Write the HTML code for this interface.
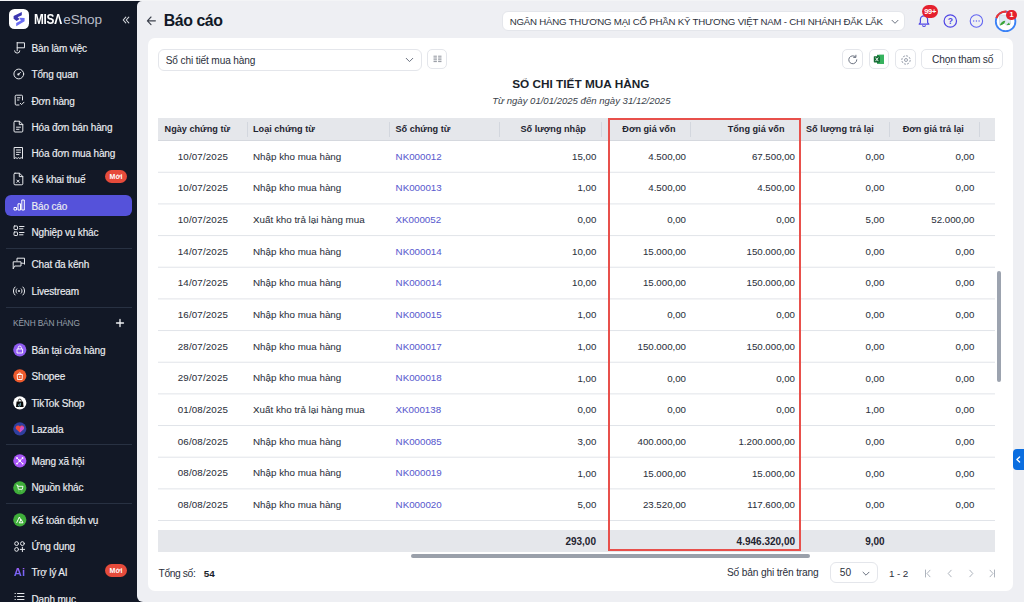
<!DOCTYPE html><html><head><meta charset="utf-8"><style>
*{box-sizing:border-box;margin:0;padding:0}
html,body{width:1024px;height:602px;overflow:hidden;background:#f3f4f6;font-family:"Liberation Sans", sans-serif;}
.a{position:absolute}
.t{position:absolute;white-space:nowrap}
</style></head><body>
<div class="a" style="left:0.00px;top:1.30px;width:145.00px;height:601.00px;background:#121826"></div>
<div class="a" style="left:8.80px;top:8.60px;width:20.60px;height:20.70px;background:#fff;border-radius:5.5px"></div>
<svg class="a" style="left:0px;top:0px" width="32" height="32" viewBox="0 0 32 32"><path d="M13.6 16.0 L21.8 12.0 L21.8 15.2 L17.6 17.3 L19.6 18.9 L16.6 21.0 L13.6 18.7 Z" fill="#3b36b0"/><path d="M19.3 17.8 L24.6 18.0 L24.6 21.3 L16.2 26.2 L16.2 23.0 L20.9 20.5 Z" fill="#6a6cf2"/></svg>
<div class="t" style="left:34.3px;top:11.0px;font-size:14.4px;line-height:17px;color:#fff;font-weight:700;letter-spacing:-0.3px;transform:scaleX(0.82);transform-origin:0 0">MISΛ</div>
<div class="t" style="top:10.79px;font-size:13.6px;line-height:17.0px;color:#b8bcc6;letter-spacing:-0.1px;left:63.20px;">eShop</div>
<svg class="a" style="left:122px;top:16px" width="8" height="8" viewBox="0 0 8 8"><path d="M3.8 1.2 L1.2 4 L3.8 6.8 M6.8 1.2 L4.2 4 L6.8 6.8" fill="none" stroke="#d5d8de" stroke-width="1.1" stroke-linecap="round" stroke-linejoin="round"/></svg>
<div class="a" style="left:5.00px;top:195.00px;width:127.00px;height:21.20px;background:#5552da;border-radius:6px"></div>
<div class="t" style="top:42.88px;font-size:10px;line-height:12.5px;color:#eceef2;letter-spacing:-0.15px;left:31.50px;-webkit-text-stroke:0.15px #eceef2;">Bàn làm việc</div>
<div class="t" style="top:69.38px;font-size:10px;line-height:12.5px;color:#eceef2;letter-spacing:-0.15px;left:31.50px;-webkit-text-stroke:0.15px #eceef2;">Tổng quan</div>
<div class="t" style="top:95.58px;font-size:10px;line-height:12.5px;color:#eceef2;letter-spacing:-0.15px;left:31.50px;-webkit-text-stroke:0.15px #eceef2;">Đơn hàng</div>
<div class="t" style="top:121.88px;font-size:10px;line-height:12.5px;color:#eceef2;letter-spacing:-0.15px;left:31.50px;-webkit-text-stroke:0.15px #eceef2;">Hóa đơn bán hàng</div>
<div class="t" style="top:148.09px;font-size:10px;line-height:12.5px;color:#eceef2;letter-spacing:-0.15px;left:31.50px;-webkit-text-stroke:0.15px #eceef2;">Hóa đơn mua hàng</div>
<div class="t" style="top:174.28px;font-size:10px;line-height:12.5px;color:#eceef2;letter-spacing:-0.15px;left:31.50px;-webkit-text-stroke:0.15px #eceef2;">Kê khai thuế</div>
<div class="t" style="top:200.59px;font-size:10px;line-height:12.5px;color:#eceef2;letter-spacing:-0.15px;left:31.50px;-webkit-text-stroke:0.15px #eceef2;">Báo cáo</div>
<div class="t" style="top:226.89px;font-size:10px;line-height:12.5px;color:#eceef2;letter-spacing:-0.15px;left:31.50px;-webkit-text-stroke:0.15px #eceef2;">Nghiệp vụ khác</div>
<div class="t" style="top:259.39px;font-size:10px;line-height:12.5px;color:#eceef2;letter-spacing:-0.15px;left:31.50px;-webkit-text-stroke:0.15px #eceef2;">Chat đa kênh</div>
<div class="t" style="top:285.89px;font-size:10px;line-height:12.5px;color:#eceef2;letter-spacing:-0.15px;left:31.50px;-webkit-text-stroke:0.15px #eceef2;">Livestream</div>
<div class="t" style="top:344.89px;font-size:10px;line-height:12.5px;color:#eceef2;letter-spacing:-0.15px;left:31.50px;-webkit-text-stroke:0.15px #eceef2;">Bán tại cửa hàng</div>
<div class="t" style="top:371.39px;font-size:10px;line-height:12.5px;color:#eceef2;letter-spacing:-0.15px;left:31.50px;-webkit-text-stroke:0.15px #eceef2;">Shopee</div>
<div class="t" style="top:397.59px;font-size:10px;line-height:12.5px;color:#eceef2;letter-spacing:-0.15px;left:31.50px;-webkit-text-stroke:0.15px #eceef2;">TikTok Shop</div>
<div class="t" style="top:423.79px;font-size:10px;line-height:12.5px;color:#eceef2;letter-spacing:-0.15px;left:31.50px;-webkit-text-stroke:0.15px #eceef2;">Lazada</div>
<div class="t" style="top:456.09px;font-size:10px;line-height:12.5px;color:#eceef2;letter-spacing:-0.15px;left:31.50px;-webkit-text-stroke:0.15px #eceef2;">Mạng xã hội</div>
<div class="t" style="top:482.49px;font-size:10px;line-height:12.5px;color:#eceef2;letter-spacing:-0.15px;left:31.50px;-webkit-text-stroke:0.15px #eceef2;">Nguồn khác</div>
<div class="t" style="top:514.58px;font-size:10px;line-height:12.5px;color:#eceef2;letter-spacing:-0.15px;left:31.50px;-webkit-text-stroke:0.15px #eceef2;">Kế toán dịch vụ</div>
<div class="t" style="top:541.08px;font-size:10px;line-height:12.5px;color:#eceef2;letter-spacing:-0.15px;left:31.50px;-webkit-text-stroke:0.15px #eceef2;">Ứng dụng</div>
<div class="t" style="top:567.18px;font-size:10px;line-height:12.5px;color:#eceef2;letter-spacing:-0.15px;left:31.50px;-webkit-text-stroke:0.15px #eceef2;">Trợ lý AI</div>
<div class="t" style="top:593.58px;font-size:10px;line-height:12.5px;color:#eceef2;letter-spacing:-0.15px;left:31.50px;-webkit-text-stroke:0.15px #eceef2;">Danh mục</div>
<div class="a" style="left:5.50px;top:248.00px;width:126.00px;height:1.00px;background:#283142"></div>
<div class="a" style="left:5.50px;top:306.60px;width:126.00px;height:1.00px;background:#283142"></div>
<div class="a" style="left:5.50px;top:444.40px;width:126.00px;height:1.00px;background:#283142"></div>
<div class="a" style="left:5.50px;top:503.40px;width:126.00px;height:1.00px;background:#283142"></div>
<div class="t" style="top:317.93px;font-size:8.3px;line-height:10.38px;color:#9aa0ad;letter-spacing:-0.16px;left:13.10px;">KÊNH BÁN HÀNG</div>
<svg class="a" style="left:115px;top:318px" width="10" height="10" viewBox="0 0 10 10"><path d="M5 1.5 V8.5 M1.5 5 H8.5" stroke="#f0f1f4" stroke-width="1.3" stroke-linecap="round"/></svg>
<svg class="a" style="left:13px;top:41px" width="13" height="13" viewBox="0 0 13 13"><path d="M4.2 1.5 V9.8 M4.2 1.8 H11.5 V6.8 H4.2 M1.6 9.8 A2.6 2.3 0 0 0 6.8 9.8" stroke="#e6e8ec" stroke-width="1" fill="none" stroke-linecap="round" stroke-linejoin="round"/></svg>
<svg class="a" style="left:13px;top:68px" width="12" height="12" viewBox="0 0 12 12"><circle cx="5.8" cy="6" r="4.9" stroke="#e6e8ec" stroke-width="1" fill="none" stroke-linecap="round" stroke-linejoin="round"/><path d="M5.2 6.6 L7.6 4.2" stroke="#e6e8ec" stroke-width="1" fill="none" stroke-linecap="round" stroke-linejoin="round"/><circle cx="5.4" cy="6.4" r="1.1" fill="#e6e8ec"/></svg>
<svg class="a" style="left:14px;top:94px" width="11" height="12" viewBox="0 0 11 12"><path d="M8.5 6 V2.2 A1 1 0 0 0 7.5 1.2 H2.2 A1 1 0 0 0 1.2 2.2 V10 A1 1 0 0 0 2.2 11 H5" stroke="#e6e8ec" stroke-width="1" fill="none" stroke-linecap="round" stroke-linejoin="round"/><path d="M3.5 3.8 H6 M3.5 6 H5" stroke="#e6e8ec" stroke-width="1" fill="none" stroke-linecap="round" stroke-linejoin="round"/><path d="M6.3 9.3 L7.6 10.6 L10 8.2" stroke="#e6e8ec" stroke-width="1" fill="none" stroke-linecap="round" stroke-linejoin="round"/></svg>
<svg class="a" style="left:13px;top:120px" width="11" height="13" viewBox="0 0 11 13"><path d="M2 1.2 H6.5 L9.8 4.5 V11 A1 1 0 0 1 8.8 12 H2 A1 1 0 0 1 1 11 V2.2 A1 1 0 0 1 2 1.2 Z M6.3 1.3 V4.6 H9.7 M3.5 7.2 H7.5 M3.5 9.3 H6" stroke="#e6e8ec" stroke-width="1" fill="none" stroke-linecap="round" stroke-linejoin="round"/></svg>
<svg class="a" style="left:13px;top:146px" width="11" height="14" viewBox="0 0 11 14"><path d="M1.5 1.5 H9.5 V12.5 L8.2 11.6 L6.8 12.5 L5.5 11.6 L4.2 12.5 L2.8 11.6 L1.5 12.5 Z M3.5 4 H7.5 M3.5 6.3 H7.5 M3.5 8.6 H6" stroke="#e6e8ec" stroke-width="1" fill="none" stroke-linecap="round" stroke-linejoin="round"/></svg>
<svg class="a" style="left:13px;top:172px" width="11" height="14" viewBox="0 0 11 14"><path d="M2 1.2 H6.5 L9.8 4.5 V11.8 A1 1 0 0 1 8.8 12.8 H2 A1 1 0 0 1 1 11.8 V2.2 A1 1 0 0 1 2 1.2 Z M6.3 1.3 V4.6 H9.7 M3.8 8 L6.2 10.4 M6.2 8 L3.8 10.4" stroke="#e6e8ec" stroke-width="1" fill="none" stroke-linecap="round" stroke-linejoin="round"/></svg>
<svg class="a" style="left:13px;top:199px" width="12" height="12" viewBox="0 0 12 12"><path d="M1 11 V8.5 H3.5 V11 Z M5 11 V4.8 H7.5 V11 Z M8.8 11 V1 H11.3 V11 Z" stroke="#fff" stroke-width="1" fill="none" stroke-linejoin="round"/></svg>
<svg class="a" style="left:13px;top:225px" width="12" height="12" viewBox="0 0 12 12"><rect x="1" y="1" width="3.5" height="3.5" rx="0.6" stroke="#e6e8ec" stroke-width="1" fill="none" stroke-linecap="round" stroke-linejoin="round"/><rect x="1" y="7" width="3.5" height="3.5" rx="0.6" stroke="#e6e8ec" stroke-width="1" fill="none" stroke-linecap="round" stroke-linejoin="round"/><path d="M6.5 1.5 H11 M6.5 3.8 H10 M6.5 7.5 H11 M6.5 9.8 H10" stroke="#e6e8ec" stroke-width="1" fill="none" stroke-linecap="round" stroke-linejoin="round"/></svg>
<svg class="a" style="left:12px;top:257px" width="14" height="13" viewBox="0 0 14 13"><path d="M5 3.8 V1.2 H12.5 V7.3 L11.3 6.2 H9.5 M1.2 11.5 V4.8 H9 V9 H3 Z" stroke="#e6e8ec" stroke-width="1" fill="none" stroke-linecap="round" stroke-linejoin="round"/></svg>
<svg class="a" style="left:12px;top:285px" width="14" height="12" viewBox="0 0 14 12"><circle cx="7" cy="6" r="1" fill="#e6e8ec"/><path d="M4.8 3.8 A3 3 0 0 0 4.8 8.2 M9.2 3.8 A3 3 0 0 1 9.2 8.2 M3 2 A5.5 5.5 0 0 0 3 10 M11 2 A5.5 5.5 0 0 1 11 10" stroke="#e6e8ec" stroke-width="1" fill="none" stroke-linecap="round" stroke-linejoin="round"/></svg>
<svg class="a" style="left:12.8px;top:343.1px" width="14" height="14" viewBox="0 0 14 14"><circle cx="6.8" cy="6.8" r="6.6" fill="#8f5bf0"/><path d="M4 6 H9.6 V10 H4 Z M5.2 6 V4.6 A1.6 1.6 0 0 1 8.4 4.6 V6" stroke="#fff" stroke-width="0.9" fill="none"/></svg>
<svg class="a" style="left:12.8px;top:369.2px" width="14" height="14" viewBox="0 0 14 14"><circle cx="6.8" cy="6.8" r="6.6" fill="#ee5a2c"/><path d="M4.2 5.5 H9.4 L9.1 10.5 H4.5 Z M5.5 5.5 A1.3 1.6 0 0 1 8.1 5.5" stroke="#fff" stroke-width="0.9" fill="none"/><path d="M6.8 7 V9" stroke="#fff" stroke-width="0.8"/></svg>
<svg class="a" style="left:12.8px;top:395.6px" width="14" height="14" viewBox="0 0 14 14"><circle cx="6.8" cy="6.8" r="6.6" fill="#ffffff"/><path d="M3.6 5.4 H10 L10.6 11 H3 Z" fill="#0b0b0b"/><path d="M5.3 5.6 V4.6 A1.5 1.5 0 0 1 8.3 4.6 V5.6" stroke="#0b0b0b" stroke-width="0.9" fill="none"/><path d="M7.3 6.8 V9.2 A0.9 0.9 0 1 1 6.4 8.4" stroke="#8fd6e8" stroke-width="0.8" fill="none"/></svg>
<svg class="a" style="left:12.8px;top:421.7px" width="14" height="14" viewBox="0 0 14 14"><circle cx="6.8" cy="6.8" r="6.6" fill="#2f3f9f"/><path d="M6.9 10.6 L3.0 7.0 A2.2 2.2 0 0 1 6.9 4.6 A2.2 2.2 0 0 1 10.8 7.0 Z" fill="#f0483a"/><path d="M6.9 10.6 L10.8 7.0 A2.2 2.2 0 0 0 8.2 4.2 L6.9 6.5 Z" fill="#c94fd0"/></svg>
<svg class="a" style="left:12.8px;top:454.0px" width="14" height="14" viewBox="0 0 14 14"><circle cx="6.8" cy="6.8" r="6.6" fill="#a855f7"/><path d="M4.2 4.2 L9.4 9.4 M9.4 4.2 L4.2 9.4" stroke="#fff" stroke-width="0.9"/><circle cx="6.8" cy="6.8" r="1.3" fill="#fff"/><circle cx="4" cy="4" r="0.9" fill="#fff"/><circle cx="9.6" cy="4" r="0.9" fill="#fff"/><circle cx="4" cy="9.6" r="0.9" fill="#fff"/><circle cx="9.6" cy="9.6" r="0.9" fill="#fff"/></svg>
<svg class="a" style="left:12.8px;top:480.5px" width="14" height="14" viewBox="0 0 14 14"><circle cx="6.8" cy="6.8" r="6.6" fill="#3fae3a"/><path d="M3.3 4 H4.5 L5.4 8.3 H9.3 L10 5.3 H4.9 M5.8 9.8 V10.2 M8.8 9.8 V10.2" stroke="#fff" stroke-width="0.9" fill="none"/></svg>
<svg class="a" style="left:12.8px;top:512.8px" width="14" height="14" viewBox="0 0 14 14"><circle cx="6.8" cy="6.8" r="6.6" fill="#3fae3a"/><path d="M3.6 9.8 L6.4 4 L8 7.5 M6.2 9.8 L8.2 6.5 L10 9.8 Z" stroke="#fff" stroke-width="1" fill="none" stroke-linejoin="round"/></svg>
<svg class="a" style="left:14px;top:540.5px" width="11" height="11" viewBox="0 0 11 11"><circle cx="2.6" cy="2.6" r="1.9" stroke="#e6e8ec" stroke-width="1" fill="none" stroke-linecap="round" stroke-linejoin="round"/><circle cx="8.4" cy="2.6" r="1.9" stroke="#e6e8ec" stroke-width="1" fill="none" stroke-linecap="round" stroke-linejoin="round"/><circle cx="2.6" cy="8.4" r="1.9" stroke="#e6e8ec" stroke-width="1" fill="none" stroke-linecap="round" stroke-linejoin="round"/><path d="M8.4 6.2 V10.6 M6.2 8.4 H10.6" stroke="#e6e8ec" stroke-width="1" fill="none" stroke-linecap="round" stroke-linejoin="round"/></svg>
<div class="t" style="left:13.8px;top:565.5px;font-size:11.2px;font-weight:700;line-height:13px;background:linear-gradient(180deg,#a65cf6,#5a6af3);-webkit-background-clip:text;color:transparent">Ai</div>
<svg class="a" style="left:14px;top:592px" width="11" height="10" viewBox="0 0 11 10"><path d="M1 1.5 H1.4 M3.5 1.5 H10 M1 4.5 H1.4 M3.5 4.5 H10 M1 7.5 H1.4 M3.5 7.5 H10" stroke="#e6e8ec" stroke-width="1" fill="none" stroke-linecap="round" stroke-linejoin="round"/></svg>
<div class="a" style="left:105.30px;top:169.90px;width:21.40px;height:13.30px;background:#e64b3b;border-radius:7px"></div>
<div class="t" style="top:172.70px;font-size:7.0px;line-height:8.75px;color:#fff;font-weight:700;left:105.50px;width:21.00px;text-align:center;">Mới</div>
<div class="a" style="left:105.30px;top:564.10px;width:21.40px;height:13.30px;background:#e64b3b;border-radius:7px"></div>
<div class="t" style="top:566.90px;font-size:7.0px;line-height:8.75px;color:#fff;font-weight:700;left:105.50px;width:21.00px;text-align:center;">Mới</div>
<div class="a" style="left:137.00px;top:1.30px;width:887.00px;height:601.00px;background:#eeeff3;border-radius:5px 0 0 6px"></div>
<svg class="a" style="left:146px;top:16px" width="11" height="10" viewBox="0 0 11 10"><path d="M9.4 4.8 H1.6 M5.0 1.0 L1.4 4.8 L5.0 8.6" fill="none" stroke="#3d424d" stroke-width="1.15" stroke-linecap="round" stroke-linejoin="round"/></svg>
<div class="t" style="top:10.65px;font-size:15.9px;line-height:19.88px;color:#111827;font-weight:700;letter-spacing:-0.45px;left:163.80px;">Báo cáo</div>
<div class="a" style="left:501.90px;top:10.90px;width:403.50px;height:20.60px;background:#fff;border:1px solid #e4e6eb;border-radius:6px"></div>
<div class="t" style="top:16.38px;font-size:9.7px;line-height:12.12px;color:#2b303b;letter-spacing:-0.23px;left:509.80px;">NGÂN HÀNG THƯƠNG MẠI CỔ PHẦN KỸ THƯƠNG VIỆT NAM - CHI NHÁNH ĐẮK LẮK</div>
<svg class="a" style="left:891px;top:18.5px" width="8" height="6" viewBox="0 0 8 6"><path d="M1 1.3 L4 4.3 L7 1.3" fill="none" stroke="#6b7280" stroke-width="1" stroke-linecap="round" stroke-linejoin="round"/></svg>
<svg class="a" style="left:917px;top:13px" width="14" height="15" viewBox="0 0 14 15"><path d="M2.2 11.2 H11.8 L10.6 9.5 V6.4 A3.6 3.6 0 0 0 3.4 6.4 V9.5 Z M5.6 12.8 A1.6 1.4 0 0 0 8.4 12.8" fill="none" stroke="#4f46e5" stroke-width="1.2" stroke-linejoin="round" stroke-linecap="round"/></svg>
<div class="a" style="left:922.30px;top:5.40px;width:15.60px;height:12.90px;background:#e5202e;border-radius:7px"></div>
<div class="t" style="top:7.41px;font-size:7.4px;line-height:9.25px;color:#fff;font-weight:700;letter-spacing:-0.2px;left:922.10px;width:16.00px;text-align:center;">99+</div>
<svg class="a" style="left:943px;top:14px" width="15" height="15" viewBox="0 0 15 15"><circle cx="7.3" cy="7.0" r="6.2" fill="none" stroke="#4f46e5" stroke-width="1.2"/></svg>
<div class="t" style="top:16.05px;font-size:8.6px;line-height:10.75px;color:#4f46e5;font-weight:700;left:944.30px;width:12.00px;text-align:center;">?</div>
<svg class="a" style="left:969px;top:14px" width="15" height="15" viewBox="0 0 15 15"><circle cx="7.4" cy="7.0" r="6.2" fill="none" stroke="#6366f1" stroke-width="1.1"/><circle cx="4.7" cy="7" r="0.7" fill="#6366f1"/><circle cx="7.4" cy="7" r="0.7" fill="#6366f1"/><circle cx="10.1" cy="7" r="0.7" fill="#6366f1"/></svg>
<svg class="a" style="left:994px;top:9.5px" width="23" height="23" viewBox="0 0 23 23"><circle cx="11.6" cy="11.4" r="9.8" fill="#fff" stroke="#3b82f6" stroke-width="1.8"/><path d="M2.39 8.05 A9.8 9.8 0 0 1 12.45 1.64" fill="none" stroke="#ef3434" stroke-width="2.1"/><path d="M5.5 5 H13 L16.5 8.5 V14 L13 15.5 L10 13 L5.5 15 Z" fill="#dfe8f3" stroke="#b9c3cf" stroke-width="0.5"/><path d="M5.8 15.2 Q7.5 11 11.3 10.8 Q10.8 14.5 6.2 15.4 Z" fill="#3aa53a"/><path d="M12.5 15 L15 12.5 L16 15 Z" fill="#3aa53a"/></svg>
<div class="a" style="left:1006.20px;top:9.60px;width:10.70px;height:10.70px;background:#e5202e;border-radius:50%"></div>
<div class="t" style="top:10.41px;font-size:7.4px;line-height:9.25px;color:#fff;font-weight:700;left:1006.55px;width:10.00px;text-align:center;">1</div>
<div class="a" style="left:148.00px;top:38.30px;width:865.00px;height:552.60px;background:#fff;border-radius:7px"></div>
<div class="a" style="left:158.20px;top:48.60px;width:263.50px;height:22.10px;background:#fff;border:1px solid #e4e6eb;border-radius:6px"></div>
<div class="t" style="top:55.39px;font-size:10.1px;line-height:12.62px;color:#2b303b;letter-spacing:-0.12px;left:165.70px;">Sổ chi tiết mua hàng</div>
<svg class="a" style="left:405px;top:57px" width="9" height="7" viewBox="0 0 9 7"><path d="M1.2 1.3 L4.5 4.6 L7.8 1.3" fill="none" stroke="#6b7280" stroke-width="1" stroke-linecap="round" stroke-linejoin="round"/></svg>
<div class="a" style="left:427.10px;top:49.10px;width:20.30px;height:20.30px;background:#fff;border:1px solid #e4e6eb;border-radius:5px"></div>
<svg class="a" style="left:432px;top:55px" width="11" height="9" viewBox="0 0 11 9"><path d="M1.5 1.2 H4.9 M1.5 3.0 H4.9 M1.5 4.8 H4.9 M1.5 6.6 H4.9 M6.1 1.2 H9.5 M6.1 3.0 H9.5 M6.1 4.8 H9.5 M6.1 6.6 H9.5" stroke="#7d838e" stroke-width="0.85"/></svg>
<div class="a" style="left:842.20px;top:49.10px;width:20.50px;height:20.30px;background:#fff;border:1px solid #e4e6eb;border-radius:5px"></div>
<div class="a" style="left:868.50px;top:49.10px;width:20.70px;height:20.30px;background:#fff;border:1px solid #e4e6eb;border-radius:5px"></div>
<div class="a" style="left:895.30px;top:49.10px;width:20.30px;height:20.30px;background:#fff;border:1px solid #e4e6eb;border-radius:5px"></div>
<div class="a" style="left:921.30px;top:49.10px;width:81.50px;height:20.30px;background:#fff;border:1px solid #e4e6eb;border-radius:5px"></div>
<div class="t" style="top:53.89px;font-size:10.2px;line-height:12.75px;color:#2b303b;letter-spacing:-0.18px;left:932.00px;">Chọn tham số</div>
<svg class="a" style="left:847px;top:53.5px" width="12" height="12" viewBox="0 0 12 12"><path d="M9.8 5.8 A4 4 0 1 1 8.5 2.8" fill="none" stroke="#6b7280" stroke-width="1" stroke-linecap="round"/><path d="M8.9 1.2 V3.4 H6.7" fill="none" stroke="#6b7280" stroke-width="1" stroke-linecap="round" stroke-linejoin="round"/></svg>
<svg class="a" style="left:873px;top:54px" width="12" height="11" viewBox="0 0 12 11"><rect x="4" y="0.8" width="7" height="9" fill="#1f8f45"/><rect x="6" y="0.8" width="5" height="9" fill="#36b35e"/><rect x="0.8" y="2.2" width="6.2" height="6.2" rx="0.6" fill="#136b33"/><path d="M2.5 3.6 L5.3 7.1 M5.3 3.6 L2.5 7.1" stroke="#fff" stroke-width="0.9"/></svg>
<svg class="a" style="left:899.5px;top:53.5px" width="12" height="12" viewBox="0 0 12 12"><circle cx="6" cy="6" r="4.2" fill="none" stroke="#9ca3af" stroke-width="1" stroke-dasharray="2.2 1"/><circle cx="6" cy="6" r="1.5" fill="none" stroke="#9ca3af" stroke-width="1"/></svg>
<div class="t" style="top:76.54px;font-size:11.8px;line-height:14.75px;color:#1a1f2b;font-weight:700;left:430.80px;width:300.00px;text-align:center;">SỔ CHI TIẾT MUA HÀNG</div>
<div class="t" style="top:94.50px;font-size:9.57px;line-height:11.96px;color:#3a3f4a;left:431.30px;width:300.00px;text-align:center;font-style:italic;">Từ ngày 01/01/2025 đến ngày 31/12/2025</div>
<div class="a" style="left:158.00px;top:117.80px;width:837.00px;height:23.00px;background:#e5e7eb"></div>
<div class="a" style="left:158.00px;top:139.80px;width:837.00px;height:1.00px;background:#d5d8de"></div>
<div class="a" style="left:247.00px;top:122.20px;width:1.00px;height:14.40px;background:#d3d7de"></div>
<div class="a" style="left:389.00px;top:122.20px;width:1.00px;height:14.40px;background:#d3d7de"></div>
<div class="a" style="left:499.00px;top:122.20px;width:1.00px;height:14.40px;background:#d3d7de"></div>
<div class="a" style="left:601.00px;top:122.20px;width:1.00px;height:14.40px;background:#d3d7de"></div>
<div class="a" style="left:690.00px;top:122.20px;width:1.00px;height:14.40px;background:#d3d7de"></div>
<div class="a" style="left:800.00px;top:122.20px;width:1.00px;height:14.40px;background:#d3d7de"></div>
<div class="a" style="left:889.00px;top:122.20px;width:1.00px;height:14.40px;background:#d3d7de"></div>
<div class="a" style="left:979.00px;top:122.20px;width:1.00px;height:14.40px;background:#d3d7de"></div>
<div class="t" style="top:124.01px;font-size:9.15px;line-height:11.44px;color:#1f2430;font-weight:700;left:164.60px;">Ngày chứng từ</div>
<div class="t" style="top:124.01px;font-size:9.15px;line-height:11.44px;color:#1f2430;font-weight:700;left:253.00px;">Loại chứng từ</div>
<div class="t" style="top:124.01px;font-size:9.15px;line-height:11.44px;color:#1f2430;font-weight:700;left:395.50px;">Số chứng từ</div>
<div class="t" style="top:124.01px;font-size:9.15px;line-height:11.44px;color:#1f2430;font-weight:700;left:485.80px;width:100.00px;text-align:right;">Số lượng nhập</div>
<div class="t" style="top:124.01px;font-size:9.15px;line-height:11.44px;color:#1f2430;font-weight:700;left:575.50px;width:100.00px;text-align:right;">Đơn giá vốn</div>
<div class="t" style="top:124.01px;font-size:9.15px;line-height:11.44px;color:#1f2430;font-weight:700;left:684.50px;width:100.00px;text-align:right;">Tổng giá vốn</div>
<div class="t" style="top:124.01px;font-size:9.15px;line-height:11.44px;color:#1f2430;font-weight:700;left:773.90px;width:100.00px;text-align:right;">Số lượng trả lại</div>
<div class="t" style="top:124.01px;font-size:9.15px;line-height:11.44px;color:#1f2430;font-weight:700;left:863.90px;width:100.00px;text-align:right;">Đơn giá trả lại</div>
<div class="t" style="top:150.76px;font-size:9.75px;line-height:12.19px;color:#2b303b;letter-spacing:0.15px;left:157.90px;width:90.00px;text-align:center;-webkit-text-stroke:0.05px #2b303b;">10/07/2025</div>
<div class="t" style="top:150.71px;font-size:9.8px;line-height:12.25px;color:#2b303b;left:253.00px;-webkit-text-stroke:0.05px #2b303b;">Nhập kho mua hàng</div>
<div class="t" style="top:150.76px;font-size:9.75px;line-height:12.19px;color:#5a5bcf;left:395.60px;-webkit-text-stroke:0.05px #5a5bcf;">NK000012</div>
<div class="t" style="top:150.81px;font-size:9.7px;line-height:12.12px;color:#2b303b;left:496.30px;width:100.00px;text-align:right;-webkit-text-stroke:0.05px #2b303b;">15,00</div>
<div class="t" style="top:150.81px;font-size:9.7px;line-height:12.12px;color:#2b303b;left:586.00px;width:100.00px;text-align:right;-webkit-text-stroke:0.05px #2b303b;">4.500,00</div>
<div class="t" style="top:150.81px;font-size:9.7px;line-height:12.12px;color:#2b303b;left:695.00px;width:100.00px;text-align:right;-webkit-text-stroke:0.05px #2b303b;">67.500,00</div>
<div class="t" style="top:150.81px;font-size:9.7px;line-height:12.12px;color:#2b303b;left:784.40px;width:100.00px;text-align:right;-webkit-text-stroke:0.05px #2b303b;">0,00</div>
<div class="t" style="top:150.81px;font-size:9.7px;line-height:12.12px;color:#2b303b;left:874.40px;width:100.00px;text-align:right;-webkit-text-stroke:0.05px #2b303b;">0,00</div>
<div class="t" style="top:182.43px;font-size:9.75px;line-height:12.19px;color:#2b303b;letter-spacing:0.15px;left:157.90px;width:90.00px;text-align:center;-webkit-text-stroke:0.05px #2b303b;">10/07/2025</div>
<div class="t" style="top:182.38px;font-size:9.8px;line-height:12.25px;color:#2b303b;left:253.00px;-webkit-text-stroke:0.05px #2b303b;">Nhập kho mua hàng</div>
<div class="t" style="top:182.43px;font-size:9.75px;line-height:12.19px;color:#5a5bcf;left:395.60px;-webkit-text-stroke:0.05px #5a5bcf;">NK000013</div>
<div class="t" style="top:182.48px;font-size:9.7px;line-height:12.12px;color:#2b303b;left:496.30px;width:100.00px;text-align:right;-webkit-text-stroke:0.05px #2b303b;">1,00</div>
<div class="t" style="top:182.48px;font-size:9.7px;line-height:12.12px;color:#2b303b;left:586.00px;width:100.00px;text-align:right;-webkit-text-stroke:0.05px #2b303b;">4.500,00</div>
<div class="t" style="top:182.48px;font-size:9.7px;line-height:12.12px;color:#2b303b;left:695.00px;width:100.00px;text-align:right;-webkit-text-stroke:0.05px #2b303b;">4.500,00</div>
<div class="t" style="top:182.48px;font-size:9.7px;line-height:12.12px;color:#2b303b;left:784.40px;width:100.00px;text-align:right;-webkit-text-stroke:0.05px #2b303b;">0,00</div>
<div class="t" style="top:182.48px;font-size:9.7px;line-height:12.12px;color:#2b303b;left:874.40px;width:100.00px;text-align:right;-webkit-text-stroke:0.05px #2b303b;">0,00</div>
<div class="t" style="top:214.10px;font-size:9.75px;line-height:12.19px;color:#2b303b;letter-spacing:0.15px;left:157.90px;width:90.00px;text-align:center;-webkit-text-stroke:0.05px #2b303b;">10/07/2025</div>
<div class="t" style="top:214.05px;font-size:9.8px;line-height:12.25px;color:#2b303b;left:253.00px;-webkit-text-stroke:0.05px #2b303b;">Xuất kho trả lại hàng mua</div>
<div class="t" style="top:214.10px;font-size:9.75px;line-height:12.19px;color:#5a5bcf;left:395.60px;-webkit-text-stroke:0.05px #5a5bcf;">XK000052</div>
<div class="t" style="top:214.15px;font-size:9.7px;line-height:12.12px;color:#2b303b;left:496.30px;width:100.00px;text-align:right;-webkit-text-stroke:0.05px #2b303b;">0,00</div>
<div class="t" style="top:214.15px;font-size:9.7px;line-height:12.12px;color:#2b303b;left:586.00px;width:100.00px;text-align:right;-webkit-text-stroke:0.05px #2b303b;">0,00</div>
<div class="t" style="top:214.15px;font-size:9.7px;line-height:12.12px;color:#2b303b;left:695.00px;width:100.00px;text-align:right;-webkit-text-stroke:0.05px #2b303b;">0,00</div>
<div class="t" style="top:214.15px;font-size:9.7px;line-height:12.12px;color:#2b303b;left:784.40px;width:100.00px;text-align:right;-webkit-text-stroke:0.05px #2b303b;">5,00</div>
<div class="t" style="top:214.15px;font-size:9.7px;line-height:12.12px;color:#2b303b;left:874.40px;width:100.00px;text-align:right;-webkit-text-stroke:0.05px #2b303b;">52.000,00</div>
<div class="t" style="top:245.77px;font-size:9.75px;line-height:12.19px;color:#2b303b;letter-spacing:0.15px;left:157.90px;width:90.00px;text-align:center;-webkit-text-stroke:0.05px #2b303b;">14/07/2025</div>
<div class="t" style="top:245.72px;font-size:9.8px;line-height:12.25px;color:#2b303b;left:253.00px;-webkit-text-stroke:0.05px #2b303b;">Nhập kho mua hàng</div>
<div class="t" style="top:245.77px;font-size:9.75px;line-height:12.19px;color:#5a5bcf;left:395.60px;-webkit-text-stroke:0.05px #5a5bcf;">NK000014</div>
<div class="t" style="top:245.82px;font-size:9.7px;line-height:12.12px;color:#2b303b;left:496.30px;width:100.00px;text-align:right;-webkit-text-stroke:0.05px #2b303b;">10,00</div>
<div class="t" style="top:245.82px;font-size:9.7px;line-height:12.12px;color:#2b303b;left:586.00px;width:100.00px;text-align:right;-webkit-text-stroke:0.05px #2b303b;">15.000,00</div>
<div class="t" style="top:245.82px;font-size:9.7px;line-height:12.12px;color:#2b303b;left:695.00px;width:100.00px;text-align:right;-webkit-text-stroke:0.05px #2b303b;">150.000,00</div>
<div class="t" style="top:245.82px;font-size:9.7px;line-height:12.12px;color:#2b303b;left:784.40px;width:100.00px;text-align:right;-webkit-text-stroke:0.05px #2b303b;">0,00</div>
<div class="t" style="top:245.82px;font-size:9.7px;line-height:12.12px;color:#2b303b;left:874.40px;width:100.00px;text-align:right;-webkit-text-stroke:0.05px #2b303b;">0,00</div>
<div class="t" style="top:277.44px;font-size:9.75px;line-height:12.19px;color:#2b303b;letter-spacing:0.15px;left:157.90px;width:90.00px;text-align:center;-webkit-text-stroke:0.05px #2b303b;">14/07/2025</div>
<div class="t" style="top:277.39px;font-size:9.8px;line-height:12.25px;color:#2b303b;left:253.00px;-webkit-text-stroke:0.05px #2b303b;">Nhập kho mua hàng</div>
<div class="t" style="top:277.44px;font-size:9.75px;line-height:12.19px;color:#5a5bcf;left:395.60px;-webkit-text-stroke:0.05px #5a5bcf;">NK000014</div>
<div class="t" style="top:277.49px;font-size:9.7px;line-height:12.12px;color:#2b303b;left:496.30px;width:100.00px;text-align:right;-webkit-text-stroke:0.05px #2b303b;">10,00</div>
<div class="t" style="top:277.49px;font-size:9.7px;line-height:12.12px;color:#2b303b;left:586.00px;width:100.00px;text-align:right;-webkit-text-stroke:0.05px #2b303b;">15.000,00</div>
<div class="t" style="top:277.49px;font-size:9.7px;line-height:12.12px;color:#2b303b;left:695.00px;width:100.00px;text-align:right;-webkit-text-stroke:0.05px #2b303b;">150.000,00</div>
<div class="t" style="top:277.49px;font-size:9.7px;line-height:12.12px;color:#2b303b;left:784.40px;width:100.00px;text-align:right;-webkit-text-stroke:0.05px #2b303b;">0,00</div>
<div class="t" style="top:277.49px;font-size:9.7px;line-height:12.12px;color:#2b303b;left:874.40px;width:100.00px;text-align:right;-webkit-text-stroke:0.05px #2b303b;">0,00</div>
<div class="t" style="top:309.11px;font-size:9.75px;line-height:12.19px;color:#2b303b;letter-spacing:0.15px;left:157.90px;width:90.00px;text-align:center;-webkit-text-stroke:0.05px #2b303b;">16/07/2025</div>
<div class="t" style="top:309.06px;font-size:9.8px;line-height:12.25px;color:#2b303b;left:253.00px;-webkit-text-stroke:0.05px #2b303b;">Nhập kho mua hàng</div>
<div class="t" style="top:309.11px;font-size:9.75px;line-height:12.19px;color:#5a5bcf;left:395.60px;-webkit-text-stroke:0.05px #5a5bcf;">NK000015</div>
<div class="t" style="top:309.16px;font-size:9.7px;line-height:12.12px;color:#2b303b;left:496.30px;width:100.00px;text-align:right;-webkit-text-stroke:0.05px #2b303b;">1,00</div>
<div class="t" style="top:309.16px;font-size:9.7px;line-height:12.12px;color:#2b303b;left:586.00px;width:100.00px;text-align:right;-webkit-text-stroke:0.05px #2b303b;">0,00</div>
<div class="t" style="top:309.16px;font-size:9.7px;line-height:12.12px;color:#2b303b;left:695.00px;width:100.00px;text-align:right;-webkit-text-stroke:0.05px #2b303b;">0,00</div>
<div class="t" style="top:309.16px;font-size:9.7px;line-height:12.12px;color:#2b303b;left:784.40px;width:100.00px;text-align:right;-webkit-text-stroke:0.05px #2b303b;">0,00</div>
<div class="t" style="top:309.16px;font-size:9.7px;line-height:12.12px;color:#2b303b;left:874.40px;width:100.00px;text-align:right;-webkit-text-stroke:0.05px #2b303b;">0,00</div>
<div class="t" style="top:340.78px;font-size:9.75px;line-height:12.19px;color:#2b303b;letter-spacing:0.15px;left:157.90px;width:90.00px;text-align:center;-webkit-text-stroke:0.05px #2b303b;">28/07/2025</div>
<div class="t" style="top:340.73px;font-size:9.8px;line-height:12.25px;color:#2b303b;left:253.00px;-webkit-text-stroke:0.05px #2b303b;">Nhập kho mua hàng</div>
<div class="t" style="top:340.78px;font-size:9.75px;line-height:12.19px;color:#5a5bcf;left:395.60px;-webkit-text-stroke:0.05px #5a5bcf;">NK000017</div>
<div class="t" style="top:340.83px;font-size:9.7px;line-height:12.12px;color:#2b303b;left:496.30px;width:100.00px;text-align:right;-webkit-text-stroke:0.05px #2b303b;">1,00</div>
<div class="t" style="top:340.83px;font-size:9.7px;line-height:12.12px;color:#2b303b;left:586.00px;width:100.00px;text-align:right;-webkit-text-stroke:0.05px #2b303b;">150.000,00</div>
<div class="t" style="top:340.83px;font-size:9.7px;line-height:12.12px;color:#2b303b;left:695.00px;width:100.00px;text-align:right;-webkit-text-stroke:0.05px #2b303b;">150.000,00</div>
<div class="t" style="top:340.83px;font-size:9.7px;line-height:12.12px;color:#2b303b;left:784.40px;width:100.00px;text-align:right;-webkit-text-stroke:0.05px #2b303b;">0,00</div>
<div class="t" style="top:340.83px;font-size:9.7px;line-height:12.12px;color:#2b303b;left:874.40px;width:100.00px;text-align:right;-webkit-text-stroke:0.05px #2b303b;">0,00</div>
<div class="t" style="top:372.45px;font-size:9.75px;line-height:12.19px;color:#2b303b;letter-spacing:0.15px;left:157.90px;width:90.00px;text-align:center;-webkit-text-stroke:0.05px #2b303b;">29/07/2025</div>
<div class="t" style="top:372.40px;font-size:9.8px;line-height:12.25px;color:#2b303b;left:253.00px;-webkit-text-stroke:0.05px #2b303b;">Nhập kho mua hàng</div>
<div class="t" style="top:372.45px;font-size:9.75px;line-height:12.19px;color:#5a5bcf;left:395.60px;-webkit-text-stroke:0.05px #5a5bcf;">NK000018</div>
<div class="t" style="top:372.50px;font-size:9.7px;line-height:12.12px;color:#2b303b;left:496.30px;width:100.00px;text-align:right;-webkit-text-stroke:0.05px #2b303b;">1,00</div>
<div class="t" style="top:372.50px;font-size:9.7px;line-height:12.12px;color:#2b303b;left:586.00px;width:100.00px;text-align:right;-webkit-text-stroke:0.05px #2b303b;">0,00</div>
<div class="t" style="top:372.50px;font-size:9.7px;line-height:12.12px;color:#2b303b;left:695.00px;width:100.00px;text-align:right;-webkit-text-stroke:0.05px #2b303b;">0,00</div>
<div class="t" style="top:372.50px;font-size:9.7px;line-height:12.12px;color:#2b303b;left:784.40px;width:100.00px;text-align:right;-webkit-text-stroke:0.05px #2b303b;">0,00</div>
<div class="t" style="top:372.50px;font-size:9.7px;line-height:12.12px;color:#2b303b;left:874.40px;width:100.00px;text-align:right;-webkit-text-stroke:0.05px #2b303b;">0,00</div>
<div class="t" style="top:404.12px;font-size:9.75px;line-height:12.19px;color:#2b303b;letter-spacing:0.15px;left:157.90px;width:90.00px;text-align:center;-webkit-text-stroke:0.05px #2b303b;">01/08/2025</div>
<div class="t" style="top:404.07px;font-size:9.8px;line-height:12.25px;color:#2b303b;left:253.00px;-webkit-text-stroke:0.05px #2b303b;">Xuất kho trả lại hàng mua</div>
<div class="t" style="top:404.12px;font-size:9.75px;line-height:12.19px;color:#5a5bcf;left:395.60px;-webkit-text-stroke:0.05px #5a5bcf;">XK000138</div>
<div class="t" style="top:404.17px;font-size:9.7px;line-height:12.12px;color:#2b303b;left:496.30px;width:100.00px;text-align:right;-webkit-text-stroke:0.05px #2b303b;">0,00</div>
<div class="t" style="top:404.17px;font-size:9.7px;line-height:12.12px;color:#2b303b;left:586.00px;width:100.00px;text-align:right;-webkit-text-stroke:0.05px #2b303b;">0,00</div>
<div class="t" style="top:404.17px;font-size:9.7px;line-height:12.12px;color:#2b303b;left:695.00px;width:100.00px;text-align:right;-webkit-text-stroke:0.05px #2b303b;">0,00</div>
<div class="t" style="top:404.17px;font-size:9.7px;line-height:12.12px;color:#2b303b;left:784.40px;width:100.00px;text-align:right;-webkit-text-stroke:0.05px #2b303b;">1,00</div>
<div class="t" style="top:404.17px;font-size:9.7px;line-height:12.12px;color:#2b303b;left:874.40px;width:100.00px;text-align:right;-webkit-text-stroke:0.05px #2b303b;">0,00</div>
<div class="t" style="top:435.79px;font-size:9.75px;line-height:12.19px;color:#2b303b;letter-spacing:0.15px;left:157.90px;width:90.00px;text-align:center;-webkit-text-stroke:0.05px #2b303b;">06/08/2025</div>
<div class="t" style="top:435.74px;font-size:9.8px;line-height:12.25px;color:#2b303b;left:253.00px;-webkit-text-stroke:0.05px #2b303b;">Nhập kho mua hàng</div>
<div class="t" style="top:435.79px;font-size:9.75px;line-height:12.19px;color:#5a5bcf;left:395.60px;-webkit-text-stroke:0.05px #5a5bcf;">NK000085</div>
<div class="t" style="top:435.84px;font-size:9.7px;line-height:12.12px;color:#2b303b;left:496.30px;width:100.00px;text-align:right;-webkit-text-stroke:0.05px #2b303b;">3,00</div>
<div class="t" style="top:435.84px;font-size:9.7px;line-height:12.12px;color:#2b303b;left:586.00px;width:100.00px;text-align:right;-webkit-text-stroke:0.05px #2b303b;">400.000,00</div>
<div class="t" style="top:435.84px;font-size:9.7px;line-height:12.12px;color:#2b303b;left:695.00px;width:100.00px;text-align:right;-webkit-text-stroke:0.05px #2b303b;">1.200.000,00</div>
<div class="t" style="top:435.84px;font-size:9.7px;line-height:12.12px;color:#2b303b;left:784.40px;width:100.00px;text-align:right;-webkit-text-stroke:0.05px #2b303b;">0,00</div>
<div class="t" style="top:435.84px;font-size:9.7px;line-height:12.12px;color:#2b303b;left:874.40px;width:100.00px;text-align:right;-webkit-text-stroke:0.05px #2b303b;">0,00</div>
<div class="t" style="top:467.46px;font-size:9.75px;line-height:12.19px;color:#2b303b;letter-spacing:0.15px;left:157.90px;width:90.00px;text-align:center;-webkit-text-stroke:0.05px #2b303b;">08/08/2025</div>
<div class="t" style="top:467.41px;font-size:9.8px;line-height:12.25px;color:#2b303b;left:253.00px;-webkit-text-stroke:0.05px #2b303b;">Nhập kho mua hàng</div>
<div class="t" style="top:467.46px;font-size:9.75px;line-height:12.19px;color:#5a5bcf;left:395.60px;-webkit-text-stroke:0.05px #5a5bcf;">NK000019</div>
<div class="t" style="top:467.51px;font-size:9.7px;line-height:12.12px;color:#2b303b;left:496.30px;width:100.00px;text-align:right;-webkit-text-stroke:0.05px #2b303b;">1,00</div>
<div class="t" style="top:467.51px;font-size:9.7px;line-height:12.12px;color:#2b303b;left:586.00px;width:100.00px;text-align:right;-webkit-text-stroke:0.05px #2b303b;">15.000,00</div>
<div class="t" style="top:467.51px;font-size:9.7px;line-height:12.12px;color:#2b303b;left:695.00px;width:100.00px;text-align:right;-webkit-text-stroke:0.05px #2b303b;">15.000,00</div>
<div class="t" style="top:467.51px;font-size:9.7px;line-height:12.12px;color:#2b303b;left:784.40px;width:100.00px;text-align:right;-webkit-text-stroke:0.05px #2b303b;">0,00</div>
<div class="t" style="top:467.51px;font-size:9.7px;line-height:12.12px;color:#2b303b;left:874.40px;width:100.00px;text-align:right;-webkit-text-stroke:0.05px #2b303b;">0,00</div>
<div class="t" style="top:499.13px;font-size:9.75px;line-height:12.19px;color:#2b303b;letter-spacing:0.15px;left:157.90px;width:90.00px;text-align:center;-webkit-text-stroke:0.05px #2b303b;">08/08/2025</div>
<div class="t" style="top:499.08px;font-size:9.8px;line-height:12.25px;color:#2b303b;left:253.00px;-webkit-text-stroke:0.05px #2b303b;">Nhập kho mua hàng</div>
<div class="t" style="top:499.13px;font-size:9.75px;line-height:12.19px;color:#5a5bcf;left:395.60px;-webkit-text-stroke:0.05px #5a5bcf;">NK000020</div>
<div class="t" style="top:499.18px;font-size:9.7px;line-height:12.12px;color:#2b303b;left:496.30px;width:100.00px;text-align:right;-webkit-text-stroke:0.05px #2b303b;">5,00</div>
<div class="t" style="top:499.18px;font-size:9.7px;line-height:12.12px;color:#2b303b;left:586.00px;width:100.00px;text-align:right;-webkit-text-stroke:0.05px #2b303b;">23.520,00</div>
<div class="t" style="top:499.18px;font-size:9.7px;line-height:12.12px;color:#2b303b;left:695.00px;width:100.00px;text-align:right;-webkit-text-stroke:0.05px #2b303b;">117.600,00</div>
<div class="t" style="top:499.18px;font-size:9.7px;line-height:12.12px;color:#2b303b;left:784.40px;width:100.00px;text-align:right;-webkit-text-stroke:0.05px #2b303b;">0,00</div>
<div class="t" style="top:499.18px;font-size:9.7px;line-height:12.12px;color:#2b303b;left:874.40px;width:100.00px;text-align:right;-webkit-text-stroke:0.05px #2b303b;">0,00</div>
<svg class="a" style="left:158px;top:0" width="837" height="602"><line x1="0" x2="837" y1="172.26" y2="172.26" stroke="#e1e4e9" stroke-width="1"/><line x1="0" x2="837" y1="203.92" y2="203.92" stroke="#e1e4e9" stroke-width="1"/><line x1="0" x2="837" y1="235.58" y2="235.58" stroke="#e1e4e9" stroke-width="1"/><line x1="0" x2="837" y1="267.24" y2="267.24" stroke="#e1e4e9" stroke-width="1"/><line x1="0" x2="837" y1="298.90" y2="298.90" stroke="#e1e4e9" stroke-width="1"/><line x1="0" x2="837" y1="330.56" y2="330.56" stroke="#e1e4e9" stroke-width="1"/><line x1="0" x2="837" y1="362.22" y2="362.22" stroke="#e1e4e9" stroke-width="1"/><line x1="0" x2="837" y1="393.88" y2="393.88" stroke="#e1e4e9" stroke-width="1"/><line x1="0" x2="837" y1="425.54" y2="425.54" stroke="#e1e4e9" stroke-width="1"/><line x1="0" x2="837" y1="457.20" y2="457.20" stroke="#e1e4e9" stroke-width="1"/><line x1="0" x2="837" y1="488.86" y2="488.86" stroke="#e1e4e9" stroke-width="1"/><line x1="0" x2="837" y1="520.52" y2="520.52" stroke="#e1e4e9" stroke-width="1"/></svg>
<div class="a" style="left:158.00px;top:530.30px;width:837.00px;height:21.30px;background:#e5e7eb"></div>
<div class="t" style="top:535.88px;font-size:10.0px;line-height:12.5px;color:#1f2430;font-weight:700;left:496.00px;width:100.00px;text-align:right;">293,00</div>
<div class="t" style="top:535.88px;font-size:10.0px;line-height:12.5px;color:#1f2430;font-weight:700;left:695.00px;width:100.00px;text-align:right;">4.946.320,00</div>
<div class="t" style="top:535.88px;font-size:10.0px;line-height:12.5px;color:#1f2430;font-weight:700;left:784.70px;width:100.00px;text-align:right;">9,00</div>
<div class="a" style="left:607.50px;top:118.20px;width:193.60px;height:432.80px;border:2.5px solid #e8504b"></div>
<div class="a" style="left:411.20px;top:554.20px;width:398.50px;height:3.60px;background:#9aa0aa;border-radius:2px"></div>
<div class="a" style="left:996.90px;top:271.20px;width:3.70px;height:111.30px;background:#9ca3af;border-radius:2px"></div>
<div class="t" style="top:567.79px;font-size:10.3px;line-height:12.88px;color:#2b303b;letter-spacing:-0.4px;left:158.50px;">Tổng số:</div>
<div class="t" style="top:568.18px;font-size:9.9px;line-height:12.38px;color:#1a1f2b;font-weight:700;left:203.80px;">54</div>
<div class="t" style="top:567.39px;font-size:10.2px;line-height:12.75px;color:#2b303b;letter-spacing:-0.17px;left:727.00px;">Số bản ghi trên trang</div>
<div class="a" style="left:829.60px;top:562.00px;width:48.10px;height:21.30px;background:#fff;border:1px solid #e4e6eb;border-radius:6px"></div>
<div class="t" style="top:567.39px;font-size:10.2px;line-height:12.75px;color:#2b303b;left:839.80px;">50</div>
<svg class="a" style="left:862px;top:571px" width="8" height="6" viewBox="0 0 8 6"><path d="M1 1.2 L4 4.2 L7 1.2" fill="none" stroke="#6b7280" stroke-width="1" stroke-linecap="round" stroke-linejoin="round"/></svg>
<div class="t" style="top:567.68px;font-size:9.9px;line-height:12.38px;color:#2b303b;letter-spacing:-0.15px;left:889.00px;">1 - 2</div>
<svg class="a" style="left:924px;top:569px" width="8" height="9" viewBox="0 0 8 9"><path d="M1.5 1 V8 M6 1.2 L3 4.5 L6 7.8" fill="none" stroke="#a5abb5" stroke-width="0.9" stroke-linecap="round" stroke-linejoin="round"/></svg>
<svg class="a" style="left:946px;top:569px" width="8" height="9" viewBox="0 0 8 9"><path d="M5.2 1.2 L2.2 4.5 L5.2 7.8" fill="none" stroke="#a5abb5" stroke-width="0.9" stroke-linecap="round" stroke-linejoin="round"/></svg>
<svg class="a" style="left:967px;top:569px" width="8" height="9" viewBox="0 0 8 9"><path d="M2.8 1.2 L5.8 4.5 L2.8 7.8" fill="none" stroke="#a5abb5" stroke-width="0.9" stroke-linecap="round" stroke-linejoin="round"/></svg>
<svg class="a" style="left:988px;top:569px" width="8" height="9" viewBox="0 0 8 9"><path d="M2 1.2 L5 4.5 L2 7.8 M6.5 1 V8" fill="none" stroke="#a5abb5" stroke-width="0.9" stroke-linecap="round" stroke-linejoin="round"/></svg>
<div class="a" style="left:1013.00px;top:449.00px;width:11.00px;height:21.00px;background:#0b6ee0;border-radius:4px 0 0 4px"></div>
<svg class="a" style="left:1014px;top:455px" width="9" height="9" viewBox="0 0 9 9"><path d="M5.6 2.0 L2.9 4.5 L5.6 7.0" fill="none" stroke="#fff" stroke-width="1.3" stroke-linecap="round" stroke-linejoin="round"/></svg>
</body></html>
